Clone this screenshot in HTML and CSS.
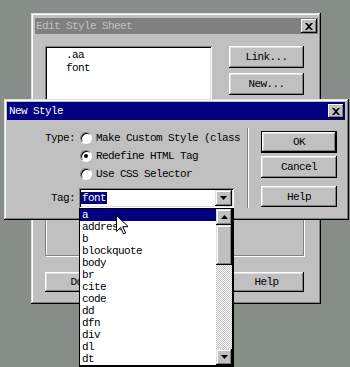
FILE: index.html
```html
<!DOCTYPE html>
<html lang="en">
<head>
    <meta charset="UTF-8">
    <title>Edit Style Sheet - New Style</title>
    <link rel="stylesheet" href="styles.css">
</head>
<body>
<div class="desktop">

    <!-- background window -->
    <div class="window edit-win">
        <div class="titlebar inactive">
            <span class="title">Edit Style Sheet</span>
            <span class="close-btn">
                <svg width="8" height="7" viewBox="0 0 8 7"><path d="M0 0h2l2 2 2-2h2L5 3.5 8 7H6L4 5 2 7H0l3-3.5z" fill="#000"/></svg>
            </span>
        </div>
        <div class="edit-body">
            <div class="edit-top">
                <div class="listbox">
                    <div class="list-item">.aa</div>
                    <div class="list-item">font</div>
                </div>
                <div class="btn-col">
                    <button class="btn">Link...</button>
                    <button class="btn">New...</button>
                </div>
            </div>
            <div class="groupbox"></div>
            <div class="edit-bottom">
                <button class="btn small">Done</button>
                <button class="btn small">Help</button>
            </div>
        </div>
    </div>

    <!-- active dialog -->
    <div class="window new-style">
        <div class="titlebar">
            <span class="title">New Style</span>
            <span class="close-btn">
                <svg width="8" height="7" viewBox="0 0 8 7"><path d="M0 0h2l2 2 2-2h2L5 3.5 8 7H6L4 5 2 7H0l3-3.5z" fill="#000"/></svg>
            </span>
        </div>
        <div class="ns-body">
            <div class="ns-form">
                <div class="form-label type-label">Type:</div>
                <div class="radio-group">
                    <div class="radio-row"><span class="radio"></span><span class="radio-text">Make Custom Style (class</span></div>
                    <div class="radio-row"><span class="radio checked"></span><span class="radio-text">Redefine HTML Tag</span></div>
                    <div class="radio-row"><span class="radio"></span><span class="radio-text">Use CSS Selector</span></div>
                </div>
                <div class="form-label tag-label">Tag:</div>
                <div class="combo">
                    <span class="combo-value">font</span>
                    <span class="combo-btn">
                        <svg width="7" height="4" viewBox="0 0 7 4"><path d="M0 0h7L3.5 4z" fill="#000"/></svg>
                    </span>
                </div>
            </div>
            <div class="ns-sep"></div>
            <div class="ns-buttons">
                <button class="btn default">OK</button>
                <button class="btn">Cancel</button>
                <button class="btn help">Help</button>
            </div>
        </div>
    </div>

    <!-- open dropdown of the Tag combo -->
    <div class="droplist">
        <div class="drop-items">
            <div class="drop-item selected">a</div>
            <div class="drop-item">address</div>
            <div class="drop-item">b</div>
            <div class="drop-item">blockquote</div>
            <div class="drop-item">body</div>
            <div class="drop-item">br</div>
            <div class="drop-item">cite</div>
            <div class="drop-item">code</div>
            <div class="drop-item">dd</div>
            <div class="drop-item">dfn</div>
            <div class="drop-item">div</div>
            <div class="drop-item">dl</div>
            <div class="drop-item">dt</div>
        </div>
        <div class="scrollbar">
            <span class="sb-btn">
                <svg width="7" height="4" viewBox="0 0 7 4"><path d="M0 4h7L3.5 0z" fill="#000"/></svg>
            </span>
            <span class="sb-thumb"></span>
            <span class="sb-track"></span>
            <span class="sb-btn">
                <svg width="7" height="4" viewBox="0 0 7 4"><path d="M0 0h7L3.5 4z" fill="#000"/></svg>
            </span>
        </div>
    </div>

    <svg class="cursor" width="12" height="20" viewBox="0 0 12 20">
        <path d="M0.5 0.5v16l4-4 3 6.5 2.2-1-3-6.3h5.6z" fill="#fff" stroke="#000" stroke-width="1"/>
    </svg>
</div>
</body>
</html>
```

FILE: styles.css
```css
body {
    margin: 0;
    padding: 0;
    font-family: "Liberation Mono", "DejaVu Sans Mono", monospace;
    font-size: 11px;
    letter-spacing: -0.6px;
    color: #000;
}
.desktop {
    position: relative;
    width: 350px;
    height: 367px;
    overflow: hidden;
    background-color: #878e87;
}
.window {
    position: absolute;
    box-sizing: border-box;
    background: #c0c0c0;
    box-shadow: inset -1px -1px #000, inset 1px 1px #dfdfdf, inset -2px -2px #808080, inset 2px 2px #fff;
}
.edit-win {
    left: 31px;
    top: 13px;
    width: 290px;
    height: 291px;
    padding: 5px 3px 4px 4px;
}
.new-style {
    left: 4px;
    top: 99px;
    width: 345px;
    height: 121px;
    padding: 3px 4px 3px 3px;
}
.titlebar {
    display: flex;
    align-items: center;
    justify-content: space-between;
    height: 18px;
    padding: 0 1px 0 2px;
    background: #000080;
    color: #fff;
}
.titlebar.inactive {
    height: 16px;
    padding-left: 1px;
    background: #808080;
    color: #c0c0c0;
}
.title {
    white-space: nowrap;
}
.close-btn {
    display: flex;
    align-items: center;
    justify-content: center;
    width: 16px;
    height: 14px;
    box-sizing: border-box;
    background: #c0c0c0;
    box-shadow: inset -1px -1px #000, inset 1px 1px #fff, inset -2px -2px #808080;
}
.btn {
    display: block;
    box-sizing: border-box;
    margin: 0;
    padding: 0;
    border: none;
    background: #c0c0c0;
    font-family: inherit;
    font-size: 11px;
    letter-spacing: -0.6px;
    color: #000;
    box-shadow: inset -1px -1px #000, inset 1px 1px #fff, inset -2px -2px #808080, inset 2px 2px #dfdfdf;
}

/* Edit Style Sheet */
.edit-body {
    padding: 12px 0 0 10px;
}
.edit-top {
    display: flex;
    gap: 17px;
}
.listbox {
    box-sizing: border-box;
    width: 167px;
    height: 100px;
    padding: 3px 0 0 21px;
    background: #fff;
    box-shadow: inset 1px 1px #808080, inset -1px -1px #fff, inset 2px 2px #000, inset -2px -2px #dfdfdf;
}
.list-item {
    line-height: 13px;
}
.btn-col {
    display: flex;
    flex-direction: column;
    gap: 5px;
}
.btn-col .btn {
    width: 75px;
    height: 22px;
}
.groupbox {
    box-sizing: border-box;
    width: 259px;
    height: 104px;
    margin-top: 6px;
    border: 1px solid #808080;
    box-shadow: 1px 1px 0 #fff, inset 1px 1px 0 #fff;
}
.edit-bottom {
    display: flex;
    justify-content: space-between;
    width: 259px;
    margin-top: 16px;
}
.btn.small {
    width: 75px;
    height: 20px;
}

/* New Style */
.ns-body {
    display: flex;
}
.ns-form {
    display: grid;
    grid-template-columns: 30px 165px;
    column-gap: 4px;
    align-content: start;
    width: 199px;
    margin-left: 38px;
    padding-top: 9px;
}
.form-label {
    text-align: right;
    line-height: 18px;
}
.tag-label {
    margin-top: 5px;
    line-height: 20px;
}
.radio-group {
    display: flex;
    flex-direction: column;
}
.radio-row {
    display: flex;
    align-items: center;
    gap: 4px;
    height: 18px;
    padding-left: 1px;
}
.radio {
    position: relative;
    width: 12px;
    height: 12px;
    box-sizing: border-box;
    border-radius: 50%;
    background: #fff;
    border: 1px solid;
    border-color: #808080 #fff #fff #808080;
    box-shadow: inset 1px 1px #000;
}
.radio.checked::after {
    content: "";
    position: absolute;
    left: 3px;
    top: 3px;
    width: 4px;
    height: 4px;
    border-radius: 50%;
    background: #000;
}
.radio-text {
    white-space: nowrap;
}
.combo {
    display: flex;
    align-items: center;
    justify-content: space-between;
    box-sizing: border-box;
    width: 155px;
    height: 20px;
    margin-top: 5px;
    padding: 2px;
    background: #fff;
    box-shadow: inset 1px 1px #808080, inset -1px -1px #fff, inset 2px 2px #000, inset -2px -2px #dfdfdf;
}
.combo-value {
    padding: 0 1px;
    line-height: 12px;
    background: #000080;
    color: #fff;
}
.combo-btn {
    display: flex;
    align-items: center;
    justify-content: center;
    width: 17px;
    height: 16px;
    box-sizing: border-box;
    background: #c0c0c0;
    box-shadow: inset -1px -1px #000, inset 1px 1px #dfdfdf, inset -2px -2px #808080, inset 2px 2px #fff;
}
.ns-sep {
    width: 0;
    height: 80px;
    margin: 8px 0 0 3px;
    border-left: 1px solid #808080;
    border-right: 1px solid #fff;
}
.ns-buttons {
    display: flex;
    flex-direction: column;
    width: 76px;
    margin: 11px 0 0 12px;
}
.ns-buttons .btn {
    width: 76px;
    height: 22px;
    margin-bottom: 3px;
}
.ns-buttons .btn.default {
    border: 1px solid #000;
}
.ns-buttons .btn.help {
    height: 21px;
    margin-top: 5px;
}

/* Dropdown list */
.droplist {
    position: absolute;
    left: 79px;
    top: 208px;
    display: flex;
    box-sizing: border-box;
    width: 155px;
    height: 159px;
    background: #fff;
    border: 1px solid #000;
    border-right-width: 2px;
    border-bottom-width: 2px;
}
.drop-items {
    flex: 1;
}
.drop-item {
    height: 12px;
    line-height: 12px;
    padding-left: 2px;
}
.drop-item.selected {
    background: #000080;
    color: #fff;
}
.scrollbar {
    display: flex;
    flex-direction: column;
    width: 16px;
}
.sb-btn {
    display: flex;
    align-items: center;
    justify-content: center;
    height: 16px;
    box-sizing: border-box;
    background: #c0c0c0;
    box-shadow: inset -1px -1px #000, inset 1px 1px #dfdfdf, inset -2px -2px #808080, inset 2px 2px #fff;
}
.sb-thumb {
    height: 40px;
    box-sizing: border-box;
    background: #c0c0c0;
    box-shadow: inset -1px -1px #000, inset 1px 1px #dfdfdf, inset -2px -2px #808080, inset 2px 2px #fff;
}
.sb-track {
    flex: 1;
    background: repeating-conic-gradient(#c0c0c0 0 25%, #fff 0 50%) 0 0 / 2px 2px;
}
.cursor {
    position: absolute;
    left: 116px;
    top: 215px;
}
```
